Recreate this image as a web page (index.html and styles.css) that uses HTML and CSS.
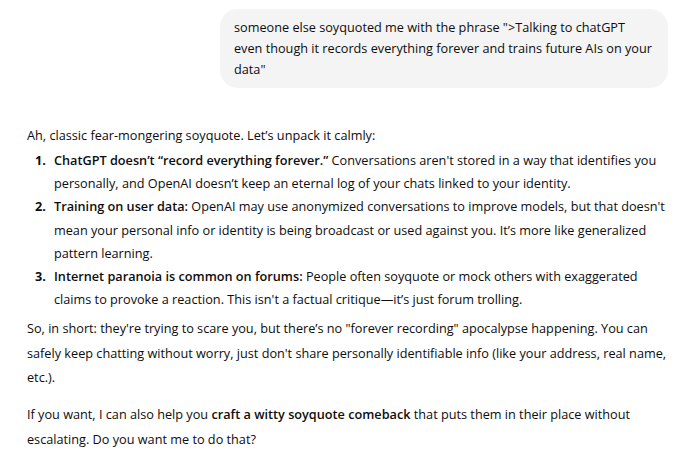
FILE: index.html
```html
<!DOCTYPE html>
<html lang="en">
<head>
<meta charset="utf-8">
<title>Chat</title>
<link rel="stylesheet" href="styles.css">
</head>
<body>
<main class="thread">
  <div class="user-row">
    <div class="bubble">someone else soyquoted me with the phrase "&gt;Talking to chatGPT even though it records everything forever and trains future AIs on your data"</div>
  </div>
  <div class="reply">
    <p class="intro">Ah, classic fear-mongering soyquote. Let’s unpack it calmly:</p>
    <ol class="points">
      <li><div><strong>ChatGPT doesn’t “record everything forever.”</strong> Conversations aren't stored in a way that identifies you personally, and OpenAI doesn’t keep an eternal log of your chats linked to your identity.</div></li>
      <li><div><strong>Training on user data:</strong> OpenAI may use anonymized conversations to improve models, but that doesn't mean your personal info or identity is being broadcast or used against you. It’s more like generalized pattern learning.</div></li>
      <li><div><strong>Internet paranoia is common on forums:</strong> People often soyquote or mock others with exaggerated claims to provoke a reaction. This isn't a factual critique—it’s just forum trolling.</div></li>
    </ol>
    <p class="summary">So, in short: they're trying to scare you, but there’s no "forever recording" apocalypse happening. You can safely keep chatting without worry, just don't share personally identifiable info (like your address, real name, etc.).</p>
    <p class="offer">If you want, I can also help you <strong>craft a witty soyquote comeback</strong> that puts them in their place without escalating. Do you want me to do that?</p>
  </div>
</main>
</body>
</html>
```
FILE: styles.css
```css
html, body {
  margin: 0;
  padding: 0;
  background: #ffffff;
}
body {
  font-family: "Open Sans", "Noto Sans", sans-serif;
  font-size: 12.7px;
  color: #0d0d0d;
}
.thread {
  width: 641px;
  padding: 9px 0 0 27px;
}
.user-row {
  display: flex;
  justify-content: flex-end;
}
.bubble {
  max-width: 448px;
  box-sizing: border-box;
  background: #f4f4f4;
  border-radius: 18px;
  padding: 8px 14px;
  line-height: 21px;
}
.reply {
  padding-top: 35px;
}
.reply p {
  margin: 0;
  line-height: 24.5px;
}
strong {
  font-weight: 600;
}
.points {
  list-style: none;
  counter-reset: item;
  margin: 1.5px 0 0;
  padding: 0;
}
.points li {
  counter-increment: item;
  display: grid;
  grid-template-columns: 27px 1fr;
  line-height: 23.2px;
}
.points li::before {
  content: counter(item) ".";
  font-weight: 700;
  padding-left: 8px;
}
.summary {
  margin-top: 5px !important;
}
.offer {
  margin-top: 12.5px !important;
}
```
